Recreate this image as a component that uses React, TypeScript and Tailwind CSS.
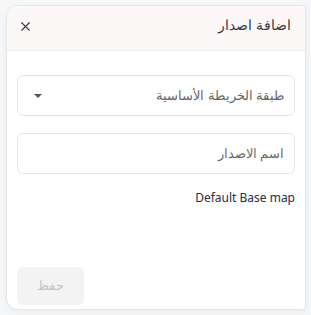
import { X } from "lucide-react";

const App = () => {
  return (
    <div className="w-[311px] h-[315px] bg-[#f4f6f7] pt-[5px] pl-[6px] pr-[5px] font-['Noto_Sans',sans-serif]" dir="ltr">
      <div className="h-[305px] bg-white border border-[#e3e7ea] rounded-l-xl rounded-r-sm flex flex-col overflow-hidden shadow-[0_2px_6px_rgba(0,0,0,0.04)]">
        <div className="h-[45px] shrink-0 bg-[#fcf8f8] border-b border-[#eeeeee] flex items-center justify-between pl-[11px] pr-[14px]">
          <X size={15} strokeWidth={1.7} className="text-[#3a3a4a] -mt-[4px]" />
          <span className="text-[13.5px] text-[#3a3a44] -mt-[6px]" dir="rtl">اضافة اصدار</span>
        </div>
        <div className="flex-1 flex flex-col px-[10px] pt-[24px]">
          <div className="h-[41px] border border-[#e6e6e6] rounded-md flex items-center justify-between pl-[16px] pr-[10px]">
            <span className="w-0 h-0 border-l-[4px] border-r-[4px] border-t-[4px] border-l-transparent border-r-transparent border-t-[#555]" />
            <span className="text-[13px] text-[#666]" dir="rtl">طبقة الخريطة الأساسية</span>
          </div>
          <div className="mt-[17px] h-[41px] border border-[#e6e6e6] rounded-md flex items-center justify-end pr-[10px]">
            <span className="text-[13px] text-[#6b6b6b]" dir="rtl">اسم الاصدار</span>
          </div>
          <div className="mt-[15px] text-right text-[12px] text-[#2b2b3a]">Default Base map</div>
          <div className="flex-1" />
          <button className="mb-[4px] w-[67px] h-[38px] rounded-md bg-[#f3f3f3] text-[13px] text-[#c4c4c4]" dir="rtl">حفظ</button>
        </div>
      </div>
    </div>
  );
};

export default App;
